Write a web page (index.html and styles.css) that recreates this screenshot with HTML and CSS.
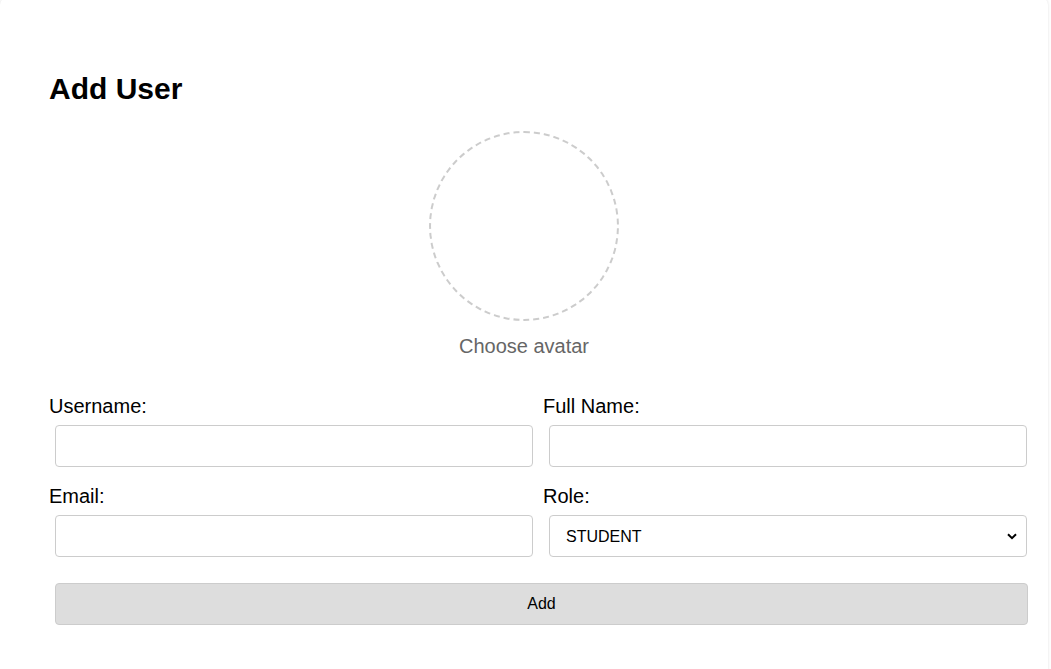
FILE: index.html
```html
<!DOCTYPE html>
<html>
<head>
<meta charset="utf-8">
<link rel="stylesheet" href="styles.css">
</head>
<body>
<div class="card">
  <h2 class="title">Add User</h2>
  <div class="avatar-block">
    <div class="avatar"></div>
    <div class="avatar-label">Choose avatar</div>
  </div>
  <form class="form">
    <div class="field">
      <label class="label">Username:</label>
      <input class="input" type="text">
    </div>
    <div class="field">
      <label class="label">Full Name:</label>
      <input class="input" type="text">
    </div>
    <div class="field">
      <label class="label">Email:</label>
      <input class="input" type="text">
    </div>
    <div class="field">
      <label class="label">Role:</label>
      <select class="input select">
        <option>STUDENT</option>
      </select>
    </div>
    <button class="btn" type="button">Add</button>
  </form>
</div>
</body>
</html>
```

FILE: styles.css
```css
html, body {
  margin: 0;
  padding: 0;
  background: #ffffff;
}
body {
  font-family: "Liberation Sans", Arial, sans-serif;
  font-size: 20px;
  color: #000;
  overflow: hidden;
}
.card {
  width: 1048px;
  min-height: 700px;
  box-sizing: border-box;
  margin-top: -3px;
  padding: 75px 0 0 49px;
  background: #fff;
  border-radius: 8px;
  box-shadow: 0 0 3px rgba(0, 0, 0, 0.12);
}
.title {
  width: 950px;
  margin: 0;
  font-size: 30px;
  font-weight: bold;
  line-height: normal;
}
.avatar-block {
  width: 950px;
  display: flex;
  flex-direction: column;
  align-items: center;
  margin-top: 25px;
}
.avatar {
  width: 190px;
  height: 190px;
  box-sizing: border-box;
  border: 2px dashed #ccc;
  border-radius: 50%;
}
.avatar-label {
  margin-top: 14px;
  color: #666;
  line-height: 23px;
}
.form {
  width: 984px;
  margin-top: 37px;
  display: grid;
  grid-template-columns: 490px 490px;
  column-gap: 4px;
  row-gap: 18px;
}
.field {
  display: flex;
  flex-direction: column;
}
.label {
  line-height: 23px;
}
.input {
  margin: 7px 6px 0 6px;
  height: 42px;
  box-sizing: border-box;
  border: 1px solid #ccc;
  border-radius: 4px;
  background: #fff;
  font-family: "Liberation Sans", Arial, sans-serif;
  font-size: 16px;
  padding: 0 10px;
}
.select {
  -webkit-appearance: none;
  appearance: none;
  padding: 0 30px 0 16px;
  color: #000;
  background-image: url("data:image/svg+xml,%3Csvg xmlns='http://www.w3.org/2000/svg' width='10' height='7' viewBox='0 0 10 7'%3E%3Cpath d='M1 1.2 L5 5.2 L9 1.2' fill='none' stroke='%23000' stroke-width='2'/%3E%3C/svg%3E");
  background-repeat: no-repeat;
  background-position: right 9px center;
  background-size: 10px 7px;
}
.btn {
  grid-column: 1 / 3;
  margin: 8px 5px 0 6px;
  height: 42px;
  box-sizing: border-box;
  border: 1px solid #ccc;
  border-radius: 4px;
  background: #ddd;
  font-family: "Liberation Sans", Arial, sans-serif;
  font-size: 16px;
  color: #000;
}
```
